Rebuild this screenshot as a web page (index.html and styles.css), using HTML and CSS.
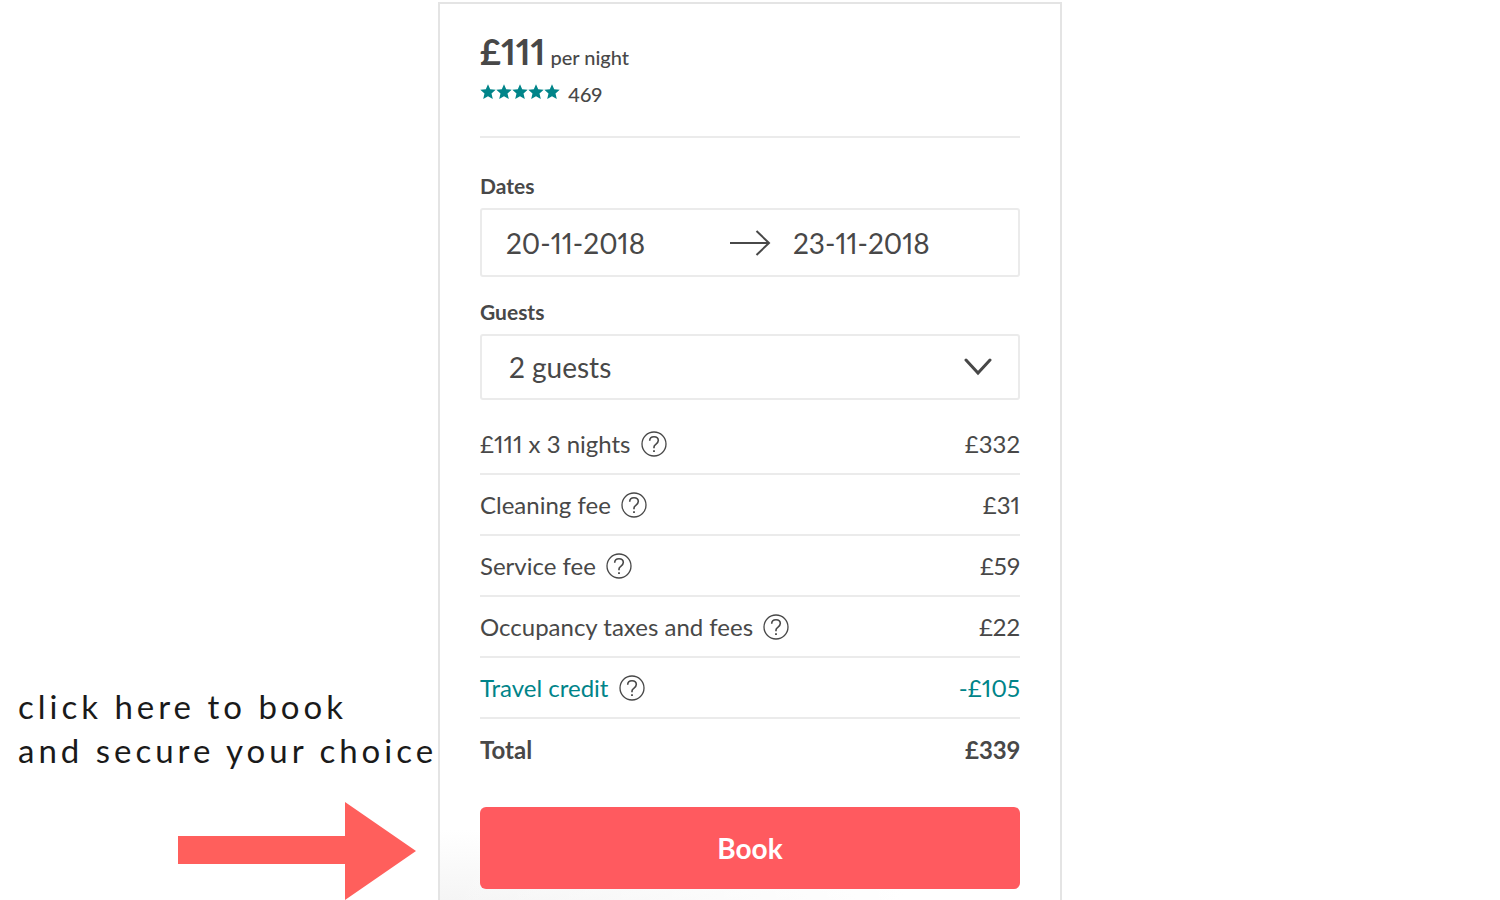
FILE: index.html
```html
<!DOCTYPE html>
<html lang="en">
<head>
	<meta charset="utf-8">
	<meta name="viewport" content="width=device-width, initial-scale=1">
	<title>Book</title>
	<link rel="stylesheet" href="styles.css">
</head>
<body>
<svg class="sprite" aria-hidden="true">
	<symbol id="star" viewBox="0 0 16 16">
		<path d="M8 .2l2.200 5 5.500.5-4.200 3.700 1.300 5.500L8 12.200l-4.800 2.700 1.300-5.500L.3 5.700l5.500-.5z"/>
	</symbol>
	<symbol id="help" viewBox="0 0 26 26">
		<circle cx="13" cy="13" r="12" stroke-width="1.300"/>
		<path d="M8.700 9.800c0-2.500 1.800-4 4.300-4s4.300 1.500 4.300 3.800c0 1.900-1.200 2.800-2.500 3.700-1.200.8-1.800 1.400-1.800 2.800v1.200" stroke-width="1.600"/>
		<path d="M13 19.200v1.800" stroke-width="1.800"/>
	</symbol>
</svg>
<div class="page">
	<div class="hint">
		<p>click here to book<br>and secure your choice</p>
		<svg class="hint-arrow" width="238" height="98" viewBox="0 0 238 98" aria-hidden="true">
			<path d="M0 34h167V0l71 49-71 49V62H0z"/>
		</svg>
	</div>
	<form class="card">
		<div class="summary">
			<div class="price"><strong>£111</strong> <span>per night</span></div>
			<div class="rating">
				<span class="stars">
					<svg><use href="#star"/></svg>
					<svg><use href="#star"/></svg>
					<svg><use href="#star"/></svg>
					<svg><use href="#star"/></svg>
					<svg><use href="#star"/></svg>
				</span>
				<span>469</span>
			</div>
		</div>

		<label class="label" for="checkin">Dates</label>
		<div class="box dates">
			<input type="text" id="checkin" value="20-11-2018">
			<svg width="42" height="26" viewBox="0 0 42 26" aria-hidden="true">
				<path d="M1 13h39M27.500 1L40 13 27.500 25"/>
			</svg>
			<input type="text" id="checkout" aria-label="Check out" value="23-11-2018">
		</div>

		<label class="label" for="guests">Guests</label>
		<div class="box guests">
			<select id="guests">
				<option>1 guest</option>
				<option selected>2 guests</option>
				<option>3 guests</option>
			</select>
			<svg width="28" height="18" viewBox="0 0 28 18" aria-hidden="true">
				<path d="M2 2l12 13L26 2"/>
			</svg>
		</div>

		<table class="fees">
			<tr>
				<th scope="row">£111 x 3 nights <button type="button" class="help" aria-label="Help"><svg><use href="#help"/></svg></button></th>
				<td>£332</td>
			</tr>
			<tr>
				<th scope="row">Cleaning fee <button type="button" class="help" aria-label="Help"><svg><use href="#help"/></svg></button></th>
				<td>£31</td>
			</tr>
			<tr>
				<th scope="row">Service fee <button type="button" class="help" aria-label="Help"><svg><use href="#help"/></svg></button></th>
				<td>£59</td>
			</tr>
			<tr>
				<th scope="row">Occupancy taxes and fees <button type="button" class="help" aria-label="Help"><svg><use href="#help"/></svg></button></th>
				<td>£22</td>
			</tr>
			<tr class="credit">
				<th scope="row">Travel credit <button type="button" class="help" aria-label="Help"><svg><use href="#help"/></svg></button></th>
				<td>-£105</td>
			</tr>
			<tr class="total">
				<th scope="row">Total</th>
				<td>£339</td>
			</tr>
		</table>

		<button type="submit" class="book">Book</button>
	</form>
</div>
</body>
</html>
```
FILE: styles.css
```css
* {
	box-sizing: border-box;
	margin: 0;
	padding: 0;
}
body {
	background: #fff;
	color: #484848;
	font-family: Lato, "Liberation Sans", sans-serif;
	font-size: 24px;
	font-variant-numeric: proportional-nums;
}
button, input, select {
	font: inherit;
	font-variant-numeric: inherit;
	color: inherit;
	background: none;
	border: 0;
}
.sprite {
	position: absolute;
	width: 0;
	height: 0;
}
.page {
	display: grid;
	grid-template-columns: 1fr minmax(0, 624px) 1fr;
	min-height: 100vh;
	padding-top: 2px;
}

/* note on the left */
.hint {
	display: flex;
	flex-direction: column;
	justify-content: flex-end;
	gap: 30px;
	min-width: 0;
	padding: 0 22px 0 18px;
}
.hint p {
	color: #1a1a1a;
	font-size: 33px;
	line-height: 44px;
	letter-spacing: 4px;
	white-space: nowrap;
}
.hint-arrow {
	align-self: flex-end;
	fill: #ff5f5c;
}

/* booking card */
.card {
	padding: 25px 40px 11px;
	border: 2px solid #e4e4e4;
	border-bottom: 0;
	background:
		linear-gradient(to right, rgba(255,255,255,0), #fff 75%),
		linear-gradient(to top, #f5f5f5, #fff 70px);
}
.summary {
	padding-bottom: 27px;
	border-bottom: 2px solid #ebebeb;
}
.price {
	font-size: 20px;
	font-weight: 500;
	line-height: 44px;
}
.price strong {
	font-size: 36px;
	font-weight: 700;
}
.rating {
	display: flex;
	align-items: center;
	gap: 8px;
	font-size: 20px;
	font-weight: 500;
	line-height: 30px;
}
.stars {
	display: flex;
	padding-bottom: 4px;
}
.stars svg {
	width: 16px;
	height: 16px;
	fill: #008489;
}
.label {
	display: block;
	padding-top: 22px;
	font-size: 21px;
	font-weight: 700;
	line-height: 26px;
	margin-bottom: 9px;
}
.summary + .label {
	padding-top: 35px;
}
.box {
	display: flex;
	align-items: center;
	border: 2px solid #ebebeb;
	border-radius: 3px;
	font-size: 28px;
}
.box svg {
	flex: none;
	fill: none;
	stroke: #484848;
	stroke-width: 2;
}
.dates {
	height: 69px;
	padding: 0 24px;
	gap: 22px;
}
.dates input {
	flex: 1;
	width: 0;
}
.guests {
	height: 66px;
	position: relative;
}
.guests select {
	width: 100%;
	height: 100%;
	padding: 0 60px 0 27px;
	appearance: none;
}
.guests svg {
	position: absolute;
	right: 26px;
	stroke-width: 3;
	stroke-linecap: round;
	pointer-events: none;
}
.fees {
	width: 100%;
	margin-top: 14px;
	border-collapse: separate;
	border-spacing: 0;
}
.fees th, .fees td {
	height: 61px;
	border-bottom: 2px solid #ebebeb;
	font-weight: 400;
	text-align: left;
}
.fees td {
	text-align: right;
}
.help {
	display: inline-block;
	width: 26px;
	height: 26px;
	margin-left: 4px;
	vertical-align: -4px;
	color: #484848;
	cursor: pointer;
}
.help svg {
	display: block;
	width: 26px;
	height: 26px;
	fill: none;
	stroke: currentColor;
}
.fees .credit {
	color: #008489;
}
.fees .total th, .fees .total td {
	border-bottom: 0;
	font-weight: 700;
}
.book {
	display: block;
	width: 100%;
	height: 82px;
	margin-top: 27px;
	border-radius: 6px;
	background: #ff5a5f;
	color: #fff;
	font-size: 28px;
	font-weight: 700;
	cursor: pointer;
}
```
